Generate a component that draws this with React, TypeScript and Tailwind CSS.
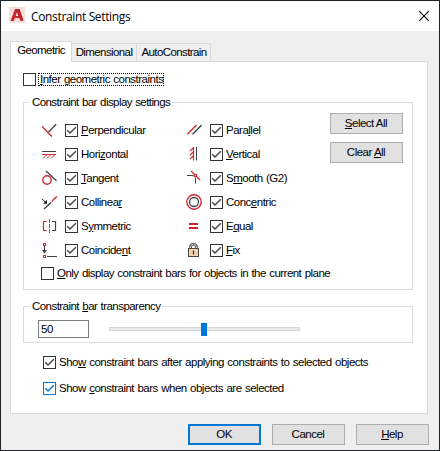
import React from 'react';

const RED = '#d22a2e';
const DARK = '#3c4450';

interface CheckboxProps {
  checked?: boolean;
  active?: boolean;
}

const Checkbox: React.FC<CheckboxProps> = ({ checked, active }) => (
  <span
    className={`flex h-[13px] w-[13px] shrink-0 border bg-white ${
      active ? 'border-[#0078d7] text-[#0078d7]' : 'border-[#333333] text-[#444444]'
    }`}
  >
    {checked && (
      <svg width="11" height="11" viewBox="0 0 11 11" fill="none">
        <path d="M1.2 5.2 L4 8 L9.8 2.2" stroke="currentColor" strokeWidth="1.4" />
      </svg>
    )}
  </span>
);

const AppLogo = () => (
  <svg width="16" height="16" viewBox="0 0 16 16" className="mb-[2px] shrink-0">
    <rect width="16" height="16" fill="#f6dfdb" />
    <path d="M1.5 14 L6 2 H10.5 L14.5 13.5 L11.5 14 L10.3 11 H6 L4.5 14 Z" fill="#c9252d" />
    <path d="M8 5 L9.4 9 H6.7 Z" fill="#f6dfdb" />
    <path d="M6 2 H10.5 L14.5 13.5 L12.5 13.8 Z" fill="#a81c24" opacity="0.45" />
  </svg>
);

const icons: Record<string, React.ReactNode> = {
  perpendicular: (
    <>
      <path d="M1 4.5 L11 14.5" stroke={RED} strokeWidth="1.4" />
      <path d="M15.2 2.3 L7.5 10" stroke={DARK} strokeWidth="1.4" />
    </>
  ),
  horizontal: (
    <>
      <path d="M1 5.5 H15" stroke={DARK} />
      <path d="M1 8.5 H15 M5.5 9 L2 12.5 M9.5 9 L6 12.5 M13.5 9 L10 12.5" stroke={RED} />
    </>
  ),
  tangent: (
    <>
      <path d="M5 1 L15.5 10.8" stroke={DARK} strokeWidth="1.3" />
      <circle cx="6" cy="10" r="4.2" stroke={RED} strokeWidth="1.4" />
    </>
  ),
  collinear: (
    <>
      <path d="M1 4.8 L4.5 8.3" stroke="#111" />
      <path d="M6 9.8 V5.8 L2.2 9.8 Z" fill="#111" />
      <path d="M3 15 L10.2 8.2" stroke={DARK} strokeWidth="1.4" />
      <path d="M10.8 7.2 L15.8 2.4" stroke={RED} strokeWidth="1.4" />
    </>
  ),
  symmetric: (
    <>
      <path d="M5.5 3.5 H2.5 V12.5 H5.5" stroke={RED} strokeWidth="1.2" />
      <path d="M8.5 1 V5 M8.5 6 V10 M8.5 11 V15" stroke={RED} />
      <path d="M11 3.5 H14.5 V12.5 H11" stroke={DARK} strokeWidth="1.2" />
    </>
  ),
  coincident: (
    <>
      <rect x="2.5" y="1.5" width="2" height="2" stroke={RED} />
      <path d="M3.5 4 V10" stroke={DARK} />
      <path d="M1 8 H6 L3.5 11.5 Z" fill={DARK} />
      <rect x="2.5" y="13.5" width="2" height="2" stroke={RED} />
      <path d="M6 14.5 H16" stroke={DARK} />
    </>
  ),
  parallel: (
    <>
      <path d="M1.3 12.2 L10.5 3" stroke={RED} strokeWidth="1.5" />
      <path d="M6.5 12.2 L15.7 3" stroke={DARK} strokeWidth="1.4" />
    </>
  ),
  vertical: (
    <>
      <path d="M7.5 1 V14.5 M7.2 2 L4 5.2 M7.2 6 L4 9.2 M7.2 10 L4 13.2" stroke={RED} strokeWidth="1.2" />
      <path d="M10.5 1 V14.5" stroke={DARK} />
    </>
  ),
  smooth: (
    <>
      <path d="M1 5.5 H6 L8 6 M9.5 7.5 V13.5" stroke={DARK} />
      <path d="M5 1 L14 10" stroke={RED} strokeWidth="1.3" />
      <rect x="8.5" y="4.5" width="2" height="2" fill="white" stroke={RED} />
    </>
  ),
  concentric: (
    <>
      <circle cx="8" cy="8" r="7.2" stroke={RED} strokeWidth="1.4" />
      <circle cx="8" cy="8" r="4.5" stroke={DARK} strokeWidth="1.3" />
    </>
  ),
  equal: <path d="M3 6 H12 M3 10 H12" stroke="#d01f25" strokeWidth="2" />,
  fix: (
    <>
      <path d="M4.5 7 V5 Q4.5 2.2 7.5 2.2 Q10.5 2.2 10.5 5 V7" stroke="#444444" strokeWidth="2.6" />
      <path d="M4.5 7 V5 Q4.5 2.2 7.5 2.2 Q10.5 2.2 10.5 5 V7" stroke="#dddddd" strokeWidth="0.9" />
      <rect x="2.5" y="6.5" width="10" height="8" fill="#efd2ac" stroke="#4a4540" />
      <path d="M7.5 8.5 V12.5" stroke="#333333" strokeWidth="1.2" />
    </>
  ),
};

interface Constraint {
  icon: string;
  label: React.ReactNode;
}

const leftConstraints: Constraint[] = [
  { icon: 'perpendicular', label: <><u>P</u>erpendicular</> },
  { icon: 'horizontal', label: <>Hori<u>z</u>ontal</> },
  { icon: 'tangent', label: <><u>T</u>angent</> },
  { icon: 'collinear', label: <>Collinea<u>r</u></> },
  { icon: 'symmetric', label: <>S<u>y</u>mmetric</> },
  { icon: 'coincident', label: <>Coincide<u>n</u>t</> },
];

const rightConstraints: Constraint[] = [
  { icon: 'parallel', label: <>Para<u>l</u>lel</> },
  { icon: 'vertical', label: <><u>V</u>ertical</> },
  { icon: 'smooth', label: <>S<u>m</u>ooth (G2)</> },
  { icon: 'concentric', label: <>Conc<u>e</u>ntric</> },
  { icon: 'equal', label: <>E<u>q</u>ual</> },
  { icon: 'fix', label: <><u>F</u>ix</> },
];

const ConstraintColumn: React.FC<{ items: Constraint[] }> = ({ items }) => (
  <div className="flex w-[145px] flex-col gap-[11px]">
    {items.map((item) => (
      <div key={item.icon} className="flex h-[13px] items-center">
        <svg width="17" height="17" viewBox="0 0 17 17" fill="none" className="mr-[7px] shrink-0">
          {icons[item.icon]}
        </svg>
        <Checkbox checked />
        <span className="ml-[3px]">{item.label}</span>
      </div>
    ))}
  </div>
);

const Button: React.FC<{ primary?: boolean; children: React.ReactNode }> = ({ primary, children }) => (
  <button
    className={`flex h-[21px] w-[73px] items-center justify-center bg-[#e1e1e1] pr-px ${
      primary ? 'border-2 border-[#0078d7]' : 'border border-[#adadad]'
    }`}
  >
    {children}
  </button>
);

export default function App() {
  return (
    <div className="flex h-[451px] w-[440px] flex-col border border-[#20242b] bg-[#efefef] font-['Liberation_Sans',sans-serif] text-[11.5px] leading-[13px] tracking-[-0.5px] [word-spacing:0.7px] whitespace-nowrap text-black [&_u]:underline-offset-1">
      <header className="flex h-[30px] items-center bg-white pr-[10px] pl-[8px]">
        <AppLogo />
        <h1 className="ml-[6px] font-['Open_Sans',sans-serif] text-[12px] tracking-[-0.35px] [word-spacing:0px]">Constraint Settings</h1>
        <svg width="10" height="10" viewBox="0 0 10 10" className="ml-auto">
          <path d="M0 0 L10 10 M10 0 L0 10" stroke="black" strokeWidth="1.1" />
        </svg>
      </header>

      <nav className="mt-[10px] flex h-[21px] items-end pl-[9px] tracking-[-0.6px]">
        <div className="z-10 flex h-[21px] w-[62px] justify-center border border-b-0 border-[#d9d9d9] bg-white pt-[2px]">
          Geometric
        </div>
        <div className="mb-px flex h-[18px] w-[65px] justify-center border-t border-r border-[#d9d9d9] pt-[2px]">
          Dimensional
        </div>
        <div className="mb-px flex h-[18px] w-[74px] justify-center border-t border-r border-[#d9d9d9] pt-[2px] pl-px">
          AutoConstrain
        </div>
      </nav>

      <main className="mx-[9px] -mt-px mr-[11px] h-[353px] border border-[#d9d9d9] bg-white pt-[11px] pl-[12px]">
        <label className="flex h-[13px] items-center">
          <Checkbox />
          <span className="ml-[2px] flex h-[13px] w-[126px] items-center border border-dotted border-black pl-px">
            <span><u>I</u>nfer geometric constraints</span>
          </span>
        </label>

        <section className="mt-[16px] flex h-[188px] w-[390px] flex-col border border-[#dcdcdc]">
          <h2 className="-mt-[7px] ml-[6px] h-[13px] self-start bg-white px-[2px] tracking-[-0.58px]">
            Constraint bar display settings
          </h2>
          <div className="mt-[4px] flex items-start">
            <div className="flex pt-[11px] pl-[17px]">
              <ConstraintColumn items={leftConstraints} />
              <ConstraintColumn items={rightConstraints} />
            </div>
            <div className="-ml-px flex flex-col gap-[8px]">
              <Button><span><u>S</u>elect All</span></Button>
              <Button><span>Clear <u>A</u>ll</span></Button>
            </div>
          </div>
          <label className="mt-[10px] ml-[17px] flex h-[13px] items-center">
            <Checkbox />
            <span className="ml-[3px] tracking-[-0.53px]">
              <u>O</u>nly display constraint bars for objects in the current plane
            </span>
          </label>
        </section>

        <section className="mt-[16px] flex h-[37px] w-[390px] flex-col border border-[#dcdcdc]">
          <h2 className="-mt-[7px] ml-[6px] h-[13px] self-start bg-white px-[2px] tracking-[-0.55px]">
            Constraint <u>b</u>ar transparency
          </h2>
          <div className="mt-[7px] ml-[14px] flex items-center">
            <div className="flex h-[18px] w-[51px] items-center border border-[#7a7a7a] pl-[2px]">50</div>
            <div className="ml-[20px] flex h-[4px] w-[191px] items-center border border-[#d6d6d6] bg-[#e7eaea] pl-[91px]">
              <span className="h-[13px] w-[6px] shrink-0 bg-[#0078d7]" />
            </div>
          </div>
        </section>

        <label className="mt-[13px] ml-[20px] flex h-[13px] items-center">
          <Checkbox checked />
          <span className="ml-[3px]">Sho<u>w</u> constraint bars after applying constraints to selected objects</span>
        </label>
        <label className="mt-[13px] ml-[20px] flex h-[13px] items-center">
          <Checkbox checked active />
          <span className="ml-[3px]">Show <u>c</u>onstraint bars when objects are selected</span>
        </label>
      </main>

      <footer className="mt-[10px] flex justify-end gap-[11px] pr-[10px]">
        <Button primary>OK</Button>
        <Button>Cancel</Button>
        <Button><span><u>H</u>elp</span></Button>
      </footer>
    </div>
  );
}
